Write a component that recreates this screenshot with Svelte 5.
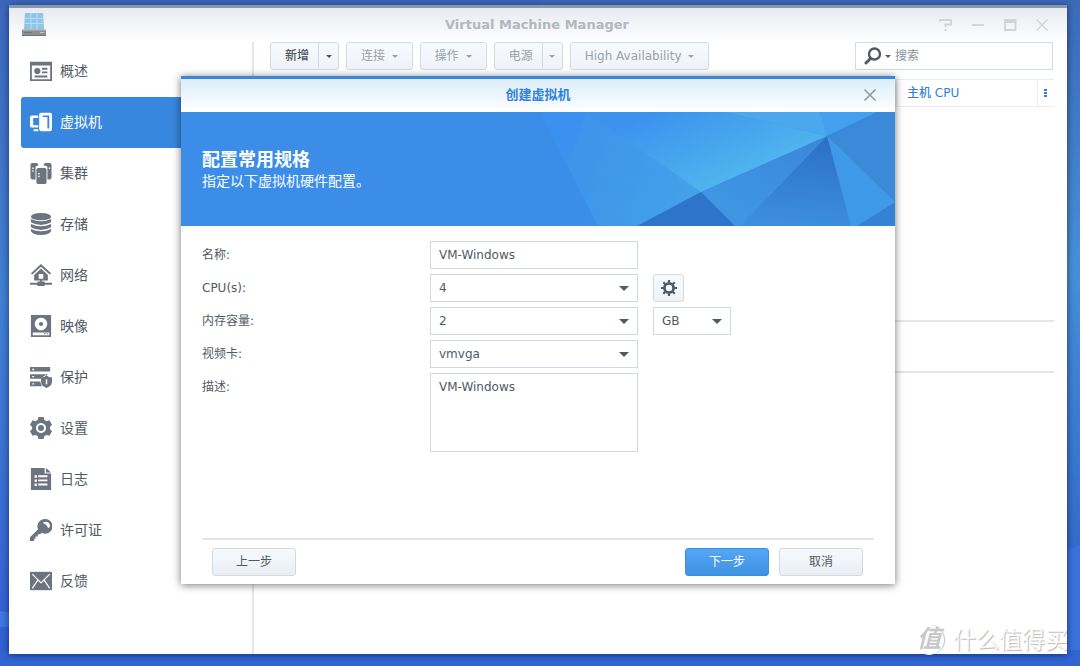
<script lang="ts">
  const nav = [
    { id: 'overview', label: '概述' },
    { id: 'vm', label: '虚拟机' },
    { id: 'cluster', label: '集群' },
    { id: 'storage', label: '存储' },
    { id: 'network', label: '网络' },
    { id: 'image', label: '映像' },
    { id: 'protection', label: '保护' },
    { id: 'settings', label: '设置' },
    { id: 'log', label: '日志' },
    { id: 'license', label: '许可证' },
    { id: 'feedback', label: '反馈' }
  ];

  let active = $state('vm');
  let search = $state('');
  let name = $state('VM-Windows');
  let cpus = $state('4');
  let memory = $state('2');
  let unit = $state('GB');
  let video = $state('vmvga');
  let description = $state('VM-Windows');
</script>

{#snippet icon(id: string)}
  <svg class="nav-icon" viewBox="0 0 24 24" fill="currentColor" aria-hidden="true">
    {#if id === 'overview'}
      <path fill-rule="evenodd" d="M0 2h24v21H0zM2 6v15h20V6z" />
      <circle cx="8" cy="12" r="3.4" />
      <path d="M13 8.500h6v2h-6zM13 12.500h6v2h-6zM5 17h14v2H5z" />
    {:else if id === 'vm'}
      <path d="M9 5H2Q0 5 0 7v9q0 2 2 2h7v-2.500H3.500v-8H9zM4 20h5v2H4z" />
      <path fill-rule="evenodd" d="M12 2h10q2 0 2 2v16q0 2-2 2H12q-2 0-2-2V4q0-2 2-2zM14 5v1.500h5V19h2V5z" />
    {:else if id === 'cluster'}
      <path d="M2.500 1H7q2 0 2 2v1H8Q6 4 6 6v13H2.500q-2 0-2-2V3q0-2 2-2z" />
      <path d="M17 1h4.500q2 0 2 2v14q0 2-2 2H19V6q0-2-2-2h-2V3q0-2 2-2z" />
      <rect x="7" y="6.500" width="11" height="17.500" rx="2" />
      <path fill="#fff" d="M2.500 6H4v1.500H2.500zM2.500 9H4v1.500H2.500zM9 12h1.500v1.500H9zM9 15h1.500v1.500H9zM20.500 6H22v1.500h-1.500z" />
    {:else if id === 'storage'}
      <ellipse cx="12" cy="4" rx="11" ry="4" />
      <path d="M1 6.500q11 5 22 0v3.500q-11 6-22 0zM1 12q11 5 22 0v3.500q-11 6-22 0zM1 17.500q11 5 22 0V20q-2 4-11 4T1 20z" />
    {:else if id === 'network'}
      <path d="M12 0l11 10-1.500 1.500L12 3 2.500 11.500 1 10z" />
      <path fill-rule="evenodd" d="M12 5l7.500 7V18h-15v-6zM9.500 11v5h5v-5z" />
      <path d="M11 17h2v2h3v1.500h8v2h-8V24H8v-1.500H0v-2h8V19h3z" />
    {:else if id === 'image'}
      <path fill-rule="evenodd" d="M1 0h22v24H1zM12 3a6.800 6.800 0 1 0 .01 0zM3 19v3h18v-3z" />
      <circle cx="12" cy="9.800" r="2.300" />
      <path d="M15 20h2v1h-2zM18 20h1.500v1H18z" />
    {:else if id === 'protection'}
      <path fill-rule="evenodd" d="M0 1h22v5H0zM2.500 3v1.500h2V3z" />
      <path fill-rule="evenodd" d="M0 9h20l-3 1-5 3v1H0zM2.500 10.800v1.500h2v-1.500z" />
      <path fill-rule="evenodd" d="M0 17h11l2 5H0zM2.500 18.800v1.500h2v-1.500z" />
      <path d="M18 10l2.500 2 3.500.5V17q0 5-6 7-6-2-6-7v-4.500l3.500-.5z" />
      <path fill="#fff" d="M17.200 14.500h1.600V20h-1.600z" />
    {:else if id === 'settings'}
      <path fill-rule="evenodd" d="M9.200 0h5.600l.9 3.200 2.300 1.300 3.200-.9 2.800 4.900-2.300 2.300v2.400l2.300 2.300-2.800 4.900-3.200-.9-2.300 1.300-.9 3.200H9.200l-.9-3.200L6 19.500l-3.200.9L0 15.500l2.300-2.300v-2.400L0 8.500l2.800-4.900 3.200.9 2.300-1.300zM12 6.500a5.500 5.500 0 1 0 .01 0z" />
      <circle cx="12" cy="12" r="3.300" />
    {:else if id === 'log'}
      <path d="M1 0h15v6h7v18H1zM17.500 0L23 5h-5.500z" />
      <path fill="#fff" d="M5 8h2.500v2.500H5zM9 8h10v2H9zM5 12.500h2.500V15H5zM9 12.500h10v2H9zM5 17h2.500v2.500H5zM9 17h10v2H9z" />
    {:else if id === 'license'}
      <path d="M16 0a8 8 0 0 0-7.200 11.300L0 20v4h4.500v-2.500H6V19h2.500v-2.500H11l2-1.400A8 8 0 1 0 16 0z" />
      <path fill="#fff" d="M14 4q5-2.500 7 1t-1 5q-1.500-4-6-6z" />
    {:else}
      <path d="M0 2h24v20H0z" />
      <path fill="none" stroke="#fff" stroke-width="1.300" d="M2.500 4.500L12 14l9.500-9.500M2.500 20l6-9M21.500 20l-6-9" />
    {/if}
  </svg>
{/snippet}

<main class="desktop">
  <svg class="wallpaper" viewBox="0 0 1080 666" preserveAspectRatio="none" aria-hidden="true">
    <defs>
      <linearGradient id="wl" x1="0" y1="0" x2="0" y2="1">
        <stop offset="0" stop-color="#3b68bb" />
        <stop offset=".45" stop-color="#4380d2" />
        <stop offset="1" stop-color="#315fd4" />
      </linearGradient>
      <linearGradient id="wr" x1="0" y1="0" x2="0" y2="1">
        <stop offset="0" stop-color="#3c6ab9" />
        <stop offset=".4" stop-color="#4690d9" />
        <stop offset="1" stop-color="#2c5cc2" />
      </linearGradient>
    </defs>
    <path fill="url(#wl)" d="M0 0h600v666H0z" />
    <path fill="url(#wr)" d="M540 0h540v666H540z" />
    <path fill="#3d7ae0" d="M0 611l12 2v14H0z" />
    <path fill="#3a72dc" d="M1060 552l20-7v121h-20z" />
    <path fill="#3165d4" d="M0 650h1080v16H0z" />
  </svg>

  <section class="window">
    <header class="titlebar">
      <svg class="app-icon" viewBox="0 0 24 24" aria-hidden="true">
        <path fill="#8fc5e6" d="M3 0h18l1 16H2z" />
        <path fill="none" stroke="#b9def2" d="M2.500 5.500h19M2.500 10.500h19M9 0v16M15 0v16" />
        <path fill="#8c9092" d="M1 16h22l1 2v5H0v-5z" />
        <path fill="#b7b9ba" d="M1 16h22l1 1.500H0z" />
        <path fill="#c9c9a8" d="M18 19h4v1h-4z" />
        <path fill="#6f7375" d="M2 19h8v1H2zM0 22h24v1H0z" />
      </svg>
      <h1>Virtual Machine Manager</h1>
      <div class="controls">
        <button aria-label="帮助"><svg viewBox="0 0 14 14"><path d="M1 3.500V2h11v4.500H6.500V9M6.500 11v2" /></svg></button>
        <button aria-label="最小化"><svg viewBox="0 0 14 14"><path d="M1 7h12" /></svg></button>
        <button aria-label="最大化"><svg viewBox="0 0 14 14"><path d="M2 2h10.500v10H2zM2 4h10" /></svg></button>
        <button aria-label="关闭"><svg viewBox="0 0 14 14"><path d="M1.500 1.500l11 11M12.500 1.500l-11 11" stroke-width="1.300" /></svg></button>
      </div>
    </header>

    <div class="body">
      <nav class="sidebar">
        {#each nav as item (item.id)}
          <button class="nav-item" class:active={active === item.id} onclick={() => (active = item.id)}>
            {@render icon(item.id)}
            <span>{item.label}</span>
          </button>
        {/each}
      </nav>

      <div class="content">
        <div class="toolbar">
          <div class="split enabled">
            <button class="tool">新增</button>
            <button class="tool arrow" aria-label="新增选项"><i class="caret"></i></button>
          </div>
          <button class="tool" disabled>连接 <i class="caret"></i></button>
          <button class="tool" disabled>操作 <i class="caret"></i></button>
          <div class="split">
            <button class="tool" disabled>电源</button>
            <button class="tool arrow" aria-label="电源选项" disabled><i class="caret"></i></button>
          </div>
          <button class="tool" disabled>High Availability <i class="caret"></i></button>

          <label class="search">
            <svg viewBox="0 0 18 18" aria-hidden="true">
              <circle cx="10.500" cy="7" r="5.500" />
              <path d="M6.500 11.500L2 16" stroke-width="3" stroke-linecap="round" />
            </svg>
            <i class="caret"></i>
            <input type="text" placeholder="搜索" aria-label="搜索" bind:value={search} />
          </label>
        </div>

        <table class="list">
          <thead>
            <tr>
              <td></td>
              <th scope="col" class="host">主机 CPU</th>
              <th scope="col" class="more">
                <button aria-label="列设置">
                  <svg viewBox="0 0 3 9" width="3" height="9"><path d="M0 0h3v2H0zM0 3h3v2H0zM0 6h3v2H0z" fill="currentColor" /></svg>
                </button>
              </th>
            </tr>
          </thead>
        </table>
        <div class="tabs"></div>
      </div>
    </div>

    <div class="overlay">
      <div class="dialog" role="dialog" aria-labelledby="dialog-title">
        <header class="dialog-title">
          <h2 id="dialog-title">创建虚拟机</h2>
          <button class="close" aria-label="关闭">
            <svg viewBox="0 0 14 14"><path d="M1.500 1.500l11 11M12.500 1.500l-11 11" /></svg>
          </button>
        </header>

        <div class="banner">
          <svg class="facets" viewBox="0 0 423 114" preserveAspectRatio="xMaxYMid slice" aria-hidden="true">
            <defs>
              <linearGradient id="f1" x1="0" y1="0" x2="1" y2="0">
                <stop offset="0" stop-color="#3b8de8" />
                <stop offset="1" stop-color="#3b93e8" />
              </linearGradient>
              <linearGradient id="f2" x1=".1" y1="0" x2=".5" y2="1">
                <stop offset="0" stop-color="#3a8ff0" />
                <stop offset="1" stop-color="#3e98e6" />
              </linearGradient>
              <linearGradient id="f3" gradientUnits="userSpaceOnUse" x1="190" y1="0" x2="225" y2="85">
                <stop offset="0" stop-color="#3c93ee" />
                <stop offset="1" stop-color="#50b6ee" />
              </linearGradient>
              <linearGradient id="f4" x1="1" y1="0" x2="0" y2="1">
                <stop offset="0" stop-color="#3a86d8" />
                <stop offset="1" stop-color="#409ae6" />
              </linearGradient>
              <linearGradient id="f5" x1=".6" y1="0" x2=".5" y2="1">
                <stop offset="0" stop-color="#2b70c4" />
                <stop offset="1" stop-color="#3d8edf" />
              </linearGradient>
              <linearGradient id="f6" x1="0" y1="0" x2="1" y2="0">
                <stop offset="0" stop-color="#3e95e8" />
                <stop offset="1" stop-color="#48a8ec" />
              </linearGradient>
            </defs>
            <path fill="url(#f1)" d="M0 0h423v114H0z" />
            <path fill="url(#f2)" d="M68 0h130l80 114H126z" />
            <path fill="url(#f6)" d="M114 0l115 80-64 34h-39L96 54z" opacity=".6" />
            <path fill="url(#f3)" d="M114 0h139l102 24-126 56z" />
            <path fill="#4ba8ee" d="M253 0h95l7 24z" />
            <path fill="#43a0f0" d="M348 0h57l-50 24z" />
            <path fill="#3b8ada" d="M405 0h18v90L355 24z" />
            <path fill="#3f99e9" d="M355 24l68 66v24h-44z" />
            <path fill="url(#f5)" d="M355 24l24 90H268z" />
            <path fill="url(#f4)" d="M355 24l-87 90h-5l-34-34z" />
            <path fill="#2f74cb" d="M229 80l34 34h-98z" />
            <path fill="#3482d6" d="M423 90v24h-38z" />
          </svg>
          <div class="banner-text">
            <h3>配置常用规格</h3>
            <p>指定以下虚拟机硬件配置。</p>
          </div>
        </div>

        <form class="form" onsubmit={(e) => e.preventDefault()}>
          <div class="row">
            <label for="vm-name">名称:</label>
            <input id="vm-name" type="text" bind:value={name} />
          </div>
          <div class="row">
            <label for="vm-cpu">CPU(s):</label>
            <div class="select">
              <select id="vm-cpu" bind:value={cpus}><option>4</option></select>
            </div>
            <button type="button" class="gear" aria-label="CPU 设置">
              <svg viewBox="0 0 16 16" aria-hidden="true">
                <circle cx="8" cy="8" r="4.600" fill="none" stroke="currentColor" stroke-width="2.800" />
                <path stroke="currentColor" stroke-width="2.200" d="M8 0v2.500M8 13.500V16M0 8h2.500M13.500 8H16M2.300 2.300l1.800 1.800M11.900 11.900l1.800 1.800M2.300 13.700l1.800-1.800M11.900 4.100l1.800-1.800" />
              </svg>
            </button>
          </div>
          <div class="row">
            <label for="vm-memory">内存容量:</label>
            <div class="select">
              <select id="vm-memory" bind:value={memory}><option>2</option></select>
            </div>
            <div class="select unit">
              <select aria-label="单位" bind:value={unit}><option>GB</option></select>
            </div>
          </div>
          <div class="row">
            <label for="vm-video">视频卡:</label>
            <div class="select">
              <select id="vm-video" bind:value={video}><option>vmvga</option></select>
            </div>
          </div>
          <div class="row">
            <label for="vm-desc">描述:</label>
            <textarea id="vm-desc" bind:value={description}></textarea>
          </div>
        </form>

        <footer class="actions">
          <button class="back">上一步</button>
          <button class="primary">下一步</button>
          <button>取消</button>
        </footer>
      </div>
    </div>
  </section>

  <div class="watermark">
    <span class="badge">值</span>
    <span>什么值得买</span>
  </div>
</main>

<style>
  :global(body) {
    margin: 0;
    background: #3165d4;
  }
  .desktop, .desktop * {
    box-sizing: border-box;
  }
  .desktop {
    position: relative;
    display: flex;
    min-height: 100vh;
    padding: 5px 13px 12px 9px;
    overflow: hidden;
    font: 12px/18px 'DejaVu Sans', 'Noto Sans CJK SC', sans-serif;
    color: #505a64;
  }
  button, input, select, textarea {
    font: inherit;
    color: inherit;
  }
  button {
    cursor: pointer;
  }
  h1, h2, h3, p {
    margin: 0;
  }
  .wallpaper {
    position: absolute;
    inset: 0;
    width: 100%;
    height: 100%;
  }

  .window {
    position: relative;
    flex: 1;
    display: flex;
    flex-direction: column;
    min-width: 0;
    background: #fff;
    border-top: 3px solid #8c97a8;
    box-shadow: 0 1px 7px rgba(0, 10, 60, 0.6);
  }
  .titlebar {
    display: grid;
    grid-template-columns: 1fr auto 1fr;
    align-items: center;
    height: 34px;
    padding: 0 15px 0 13px;
    background: linear-gradient(#e7eaf0, #fff);
  }
  .titlebar h1 {
    font-size: 13px;
    color: #b3b8bf;
  }
  .app-icon {
    width: 24px;
    height: 24px;
  }
  .controls {
    display: flex;
    justify-content: flex-end;
    gap: 12px;
  }
  .controls button, .close {
    display: flex;
    align-items: center;
    justify-content: center;
    width: 20px;
    height: 20px;
    padding: 0;
    border: 0;
    background: none;
  }
  .controls svg, .close svg {
    width: 14px;
    height: 14px;
    fill: none;
    stroke: #d0d3d7;
    stroke-width: 1.8;
  }

  .body {
    flex: 1;
    display: flex;
  }
  .sidebar {
    flex: none;
    width: 245px;
    padding: 4px 0 0 12px;
    border-right: 2px solid #e6e6e8;
  }
  .nav-item {
    display: flex;
    align-items: center;
    gap: 8px;
    width: 100%;
    height: 51px;
    padding: 0 9px 2px;
    border: 0;
    border-radius: 3px 0 0 3px;
    background: none;
    color: #505a64;
    font-size: 14px;
  }
  .nav-item.active {
    background: #3887de;
    color: #fff;
  }
  .nav-icon {
    width: 22px;
    height: 22px;
    color: #6c757f;
  }
  .active .nav-icon {
    color: #fff;
  }

  .content {
    flex: 1;
    min-width: 0;
    display: flex;
    flex-direction: column;
  }
  .toolbar {
    display: flex;
    gap: 7px;
    padding: 0 14px 0 16px;
  }
  .tool {
    height: 28px;
    padding: 0 14px;
    border: 1px solid #d3dce5;
    border-radius: 3px;
    background: linear-gradient(#f7fafd, #eff3f9);
    color: #4a5560;
    white-space: nowrap;
  }
  .tool:disabled {
    color: #9aa2aa;
    cursor: default;
  }
  .enabled .tool {
    font-weight: 500;
  }
  .split {
    display: flex;
  }
  .split .tool:first-child {
    padding: 0 9px 0 14px;
    border-radius: 3px 0 0 3px;
  }
  .split .arrow {
    width: 21px;
    margin-left: -1px;
    padding: 0;
    border-radius: 0 3px 3px 0;
  }
  .caret {
    display: inline-block;
    vertical-align: middle;
    border: 3px solid transparent;
    border-top-color: currentColor;
    border-bottom: 0;
  }
  .tool > .caret {
    margin-left: 3px;
  }
  .arrow > .caret {
    margin-left: 0;
  }
  .search {
    display: flex;
    align-items: center;
    flex: 0 1 198px;
    min-width: 0;
    height: 28px;
    margin-left: auto;
    padding-left: 8px;
    border: 1px solid #d3dce5;
    color: #505a64;
  }
  .search svg {
    flex: none;
    width: 18px;
    height: 18px;
    margin-right: 3px;
    fill: none;
    stroke: #505a64;
    stroke-width: 2.4;
  }
  .search input {
    flex: 1;
    min-width: 0;
    padding: 0 4px;
    border: 0;
    outline: 0;
    background: none;
  }
  .search input::placeholder {
    color: #8b939b;
    opacity: 1;
  }
  .list {
    margin: 9px 13px 213px 0;
    border-collapse: collapse;
    table-layout: fixed;
  }
  .list th, .list td {
    height: 27px;
    padding: 0;
    border: 1px solid #e6ecf2;
    border-width: 1px 0;
  }
  .list td {
    background: #f0f2f5;
  }
  .list .host {
    width: 139px;
    padding-left: 9px;
    font-weight: 500;
    text-align: left;
    color: #2f82dc;
  }
  .list .more {
    width: 17px;
    border-left-width: 1px;
  }
  .more button {
    display: flex;
    margin: auto;
    padding: 0;
    border: 0;
    background: none;
    color: #2f82dc;
  }
  .tabs {
    height: 53px;
    margin-right: 13px;
    border: 2px solid #e4e5e7;
    border-width: 2px 0;
  }

  .overlay {
    position: absolute;
    inset: -3px 0 0;
    display: grid;
    place-items: center;
    padding: 0 172px;
  }
  .dialog {
    width: 100%;
    min-width: 0;
    background: #fff;
    border-top: 3px solid #3887de;
    box-shadow: 0 1px 8px rgba(0, 0, 0, 0.55);
  }
  .dialog-title {
    display: grid;
    grid-template-columns: 1fr auto 1fr;
    align-items: center;
    height: 33px;
    padding: 0 15px;
    background: linear-gradient(#dcedf9, #fff);
  }
  .dialog-title h2 {
    grid-column: 2;
    font-size: 13px;
    color: #2f82dc;
  }
  .close {
    justify-self: end;
  }
  .close svg {
    stroke: #92999f;
    stroke-width: 1.6;
  }
  .banner {
    position: relative;
    display: flex;
    align-items: center;
    height: 114px;
    padding: 3px 21px 0;
    background: #3b8de8;
    color: #fff;
  }
  .facets {
    position: absolute;
    top: 0;
    right: 0;
    height: 100%;
    width: 423px;
    max-width: 100%;
  }
  .banner-text {
    position: relative;
  }
  .banner h3 {
    font-size: 18px;
    line-height: 22px;
  }
  .banner p {
    font-size: 14px;
    line-height: 20px;
  }

  .form {
    display: flex;
    flex-direction: column;
    gap: 5px;
    min-height: 312px;
    padding: 15px 21px;
  }
  .row {
    display: grid;
    grid-template-columns: 228px 208px auto;
    justify-content: start;
  }
  .row label {
    line-height: 28px;
  }
  .row input, .row select, .row textarea {
    display: block;
    width: 100%;
    height: 28px;
    padding: 0 8px;
    border: 1px solid #d0d8e2;
    border-radius: 0;
    outline: 0;
    background: #fff;
  }
  .row select {
    appearance: none;
  }
  .row textarea {
    height: 79px;
    padding: 4px 8px;
    resize: none;
  }
  .select {
    position: relative;
  }
  .select::after {
    content: '';
    position: absolute;
    top: 12px;
    right: 9px;
    border: 5px solid transparent;
    border-top-color: #505a64;
    border-bottom: 0;
    pointer-events: none;
  }
  .unit {
    width: 78px;
    margin-left: 15px;
  }
  .gear {
    display: flex;
    align-items: center;
    justify-content: center;
    width: 31px;
    height: 28px;
    margin-left: 15px;
    padding: 0;
    border: 1px solid #d3dce5;
    border-radius: 3px;
    background: linear-gradient(#f7fafd, #eff3f9);
  }
  .gear svg {
    width: 16px;
    height: 16px;
  }

  .actions {
    display: flex;
    gap: 10px;
    margin: 0 21px;
    padding: 8px 11px 8px 10px;
    border-top: 2px solid #e4e4e6;
  }
  .actions button {
    width: 84px;
    height: 28px;
    padding: 0;
    border: 1px solid #d0d9e3;
    border-radius: 3px;
    background: linear-gradient(#f7fafd, #eaeef3);
  }
  .actions .back {
    margin-right: auto;
  }
  .actions .primary {
    border-color: #3e8ede;
    background: linear-gradient(#55a6f5, #3f91e2);
    color: #fff;
  }

  .watermark {
    position: absolute;
    right: 12px;
    bottom: 9px;
    display: flex;
    align-items: center;
    gap: 9px;
    font-size: 23px;
    line-height: 34px;
    color: rgba(255, 255, 255, 0.9);
    text-shadow: 1px 1px 1px rgba(0, 0, 0, 0.28);
    pointer-events: none;
  }
  .badge {
    width: 30px;
    height: 30px;
    border-radius: 50%;
    background: #fff;
    box-shadow: 1px 0 1px rgba(0, 0, 0, 0.25);
    color: #c8c8c8;
    font-size: 24px;
    font-style: italic;
    font-weight: bold;
    line-height: 28px;
    text-align: center;
    text-shadow: none;
  }
</style>
